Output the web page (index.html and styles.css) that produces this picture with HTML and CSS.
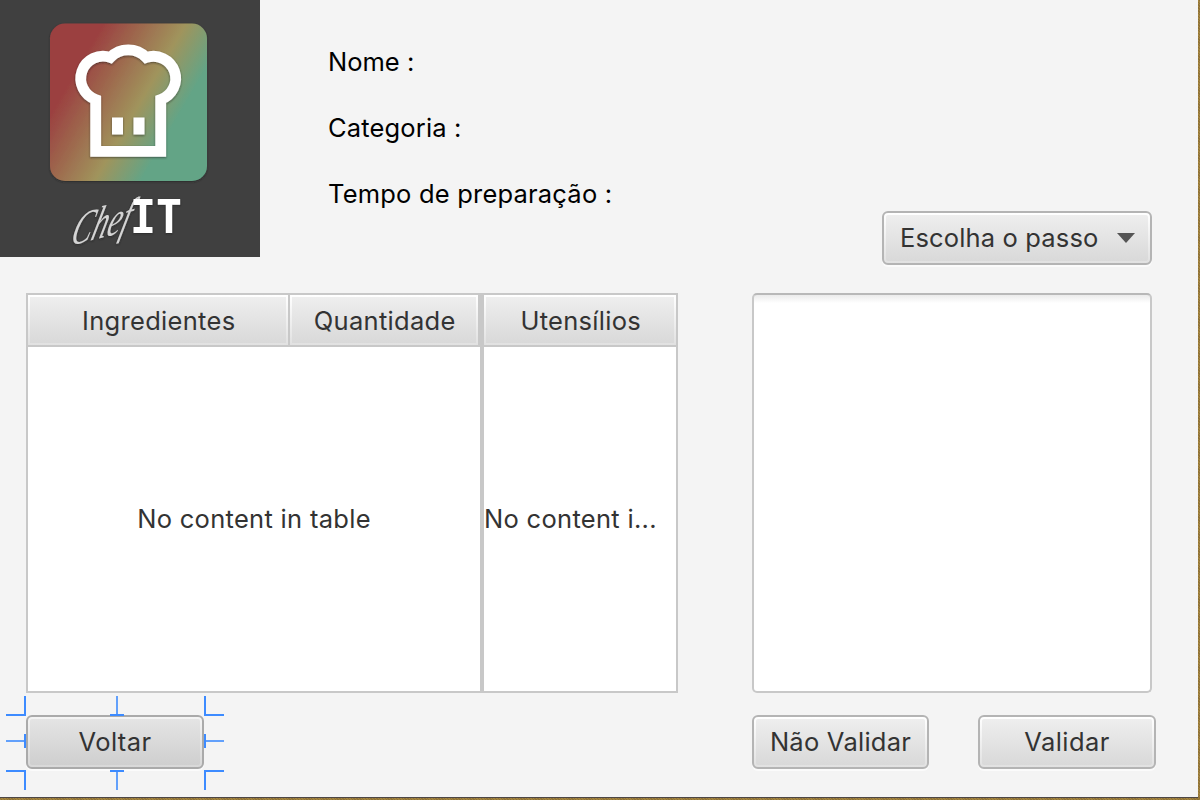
FILE: index.html
```
<!DOCTYPE html>
<html lang="pt">
<head>
<meta charset="utf-8">
<title>ChefIT</title>
<link rel="stylesheet" href="styles.css">
</head>
<body>
<div class="window">
  <header class="top">
    <svg class="logo" viewBox="0 0 260 257" role="img">
      <defs>
        <linearGradient id="tile" gradientUnits="userSpaceOnUse" x1="86.3" y1="50.3" x2="183.8" y2="107.1">
          <stop offset="0" stop-color="#9b3f40"/>
          <stop offset=".644" stop-color="#a0945c"/>
          <stop offset="1" stop-color="#63a486"/>
        </linearGradient>
        <filter id="soft" x="-20%" y="-20%" width="140%" height="140%">
          <feDropShadow dx="0" dy="1" stdDeviation="1" flood-color="#222" flood-opacity=".6"/>
        </filter>
      </defs>
      <rect width="260" height="257" fill="#404040"/>
      <rect x="50" y="23.5" width="157" height="157.500" rx="15" fill="url(#tile)" filter="url(#soft)"/>
      <g filter="url(#soft)">
        <path d="M95.700 151.300H160.700V99.500A21.900 21.900 0 1 0 146.200 57.500A25 25 0 0 0 110.300 57.500A21.900 21.900 0 1 0 95.700 99.500Z" fill="none" stroke="#fff" stroke-width="10.800"/>
        <path d="M112 117.500h11v17h-11zM133.500 117.500h11v17h-11z" fill="#fff"/>
      </g>
      <g filter="url(#soft)">
        <text class="logo-script" transform="translate(69 246) rotate(-14) skewX(-30)" textLength="60" lengthAdjust="spacingAndGlyphs">Chef</text>
        <text class="logo-mono" x="130" y="233" textLength="52" lengthAdjust="spacingAndGlyphs">IT</text>
      </g>
    </svg>
    <div class="labels">
      <span class="l-nome">Nome :</span>
      <span class="l-cat">Categoria :</span>
      <span class="l-tempo">Tempo de preparação :</span>
    </div>
    <button class="btn combo"><span class="btn-face"><span class="t-combo">Escolha o passo</span><i class="arrow"></i></span></button>
  </header>

  <main class="middle">
    <section class="table table-wide">
      <div class="head">
        <div class="col col-ing"><span class="t-head">Ingredientes</span></div>
        <div class="col col-qty"><span class="t-head">Quantidade</span></div>
      </div>
      <div class="empty"><span>No content in table</span></div>
    </section>
    <section class="table table-narrow">
      <div class="head"><div class="col col-ute"><span class="t-head">Utensílios</span></div></div>
      <div class="empty empty-left"><span>No content i...</span></div>
    </section>
    <section class="area"></section>
  </main>

  <footer class="actions">
    <div class="selected">
      <button class="btn btn-dark"><span class="btn-face"><span class="t-short">Voltar</span></span></button>
      <svg class="guides" viewBox="6 696 218 94">
        <g fill="#3d8bff">
          <path d="M6 714h20v2H6zM110 714h14v2h-14zM205 714h19v2h-19z"/>
          <path d="M6 770h20v2H6zM110 770h14v2h-14zM205 770h19v2h-19z"/>
          <path d="M24 696h2v20h-2zM24 770h2v20h-2zM204 696h2v20h-2zM204 770h2v20h-2z"/>
          <path d="M24 734h2v14h-2zM204 734h2v14h-2z"/>
        </g>
        <g fill="#62a0fb">
          <path d="M116 696h2v18h-2zM116 772h2v18h-2zM6 740h18v2H6zM206 740h18v2h-18z"/>
        </g>
      </svg>
    </div>
    <button class="btn btn-no"><span class="btn-face"><span class="t-no">Não Validar</span></span></button>
    <button class="btn btn-yes"><span class="btn-face"><span class="t-short">Validar</span></span></button>
  </footer>
</div>
</body>
</html>
```
FILE: styles.css
```
* { box-sizing: border-box; }
body {
  margin: 0;
  width: 1200px;
  height: 800px;
  overflow: hidden;
  background: repeating-linear-gradient(45deg, #a3843f 0 1px, #8f7238 1px 2px);
  font-family: Inter, "Liberation Sans", sans-serif;
  font-size: 25.5px;
  color: #333;
}
.window {
  width: 1198px;
  height: 798px;
  background: #f4f4f4;
  border-bottom: 1px solid #4d4746;
}
span { white-space: nowrap; }

.top { display: flex; height: 265px; }
.logo { display: block; width: 260px; height: 257px; }
.labels {
  display: flex;
  flex-direction: column;
  align-items: flex-start;
  margin-left: 68px;
  padding-top: 29px;
  line-height: 66px;
  color: #000;
}
.l-cat { letter-spacing: .15px; }
.l-tempo { letter-spacing: .2px; }

.btn {
  display: block;
  height: 54px;
  padding: 2px;
  border: 2px solid #b4b4b4;
  border-radius: 6px;
  background: linear-gradient(#fff, #e1e1e1);
  box-shadow: 0 2px 0 #fbfbfb;
  font: inherit;
  color: inherit;
}
.btn-face {
  display: flex;
  align-items: center;
  justify-content: center;
  height: 100%;
  padding-bottom: 2px;
  border-radius: 2px;
  background: linear-gradient(#eee, #d9d9d9);
}
.btn-dark { border-color: #aaa; background: linear-gradient(#f4f4f4, #d8d8d8); }
.btn-dark .btn-face { background: linear-gradient(#e4e4e4, #cfcfcf); }
.combo { width: 270px; margin: 211px 46px 0 auto; }
.combo .btn-face { justify-content: space-between; padding: 0 13px 2px 14px; }
.t-combo { letter-spacing: .15px; }
.t-short { letter-spacing: .4px; }
.t-no { letter-spacing: .25px; }
.t-head { padding-left: 1.5px; letter-spacing: .3px; }
.arrow {
  width: 18px;
  height: 10px;
  margin-top: 2px;
  background: #555;
  clip-path: polygon(0 0, 100% 0, 50% 100%);
}

.middle { display: flex; height: 400px; margin-top: 28px; padding-left: 26px; }
.table {
  display: flex;
  flex-direction: column;
  border: 2px solid #c8c8c8;
  background: #fff;
}
.table-wide { width: 456px; }
.table-narrow { width: 196px; }
.head { display: flex; height: 52px; border-bottom: 2px solid #c8c8c8; }
.col {
  display: flex;
  align-items: center;
  justify-content: center;
  padding: 2px;
  background: linear-gradient(#eee, #d9d9d9) content-box, linear-gradient(#fff, #e1e1e1) padding-box;
}
.col-ing { width: 262px; border-right: 2px solid #c8c8c8; }
.col-qty { width: 190px; border-right: 2px solid #c8c8c8; }
.col-ute { width: 192px; }
.empty {
  display: flex;
  flex: 1;
  align-items: center;
  justify-content: center;
  padding-bottom: 2px;
  letter-spacing: .3px;
}
.empty-left { justify-content: flex-start; }
.area {
  width: 400px;
  margin-left: 74px;
  border: 2px solid #c8c8c8;
  border-top-color: #b8b8b8;
  border-radius: 5px;
  background: linear-gradient(#ebebeb, #fff 8px);
}

.actions { display: flex; margin-top: 22px; padding-left: 26px; }
.selected { position: relative; width: 178px; }
.btn-dark { width: 178px; }
.guides { position: absolute; left: -20px; top: -19px; width: 218px; height: 94px; }
.btn-no { width: 177px; margin-left: 548px; }
.btn-yes { width: 178px; margin-left: 49px; }

.logo-script { font: italic 44px "Liberation Serif", serif; fill: #d4d4d4; }
.logo-mono { font: bold 46px "DejaVu Sans Mono", monospace; fill: #fff; }
```
